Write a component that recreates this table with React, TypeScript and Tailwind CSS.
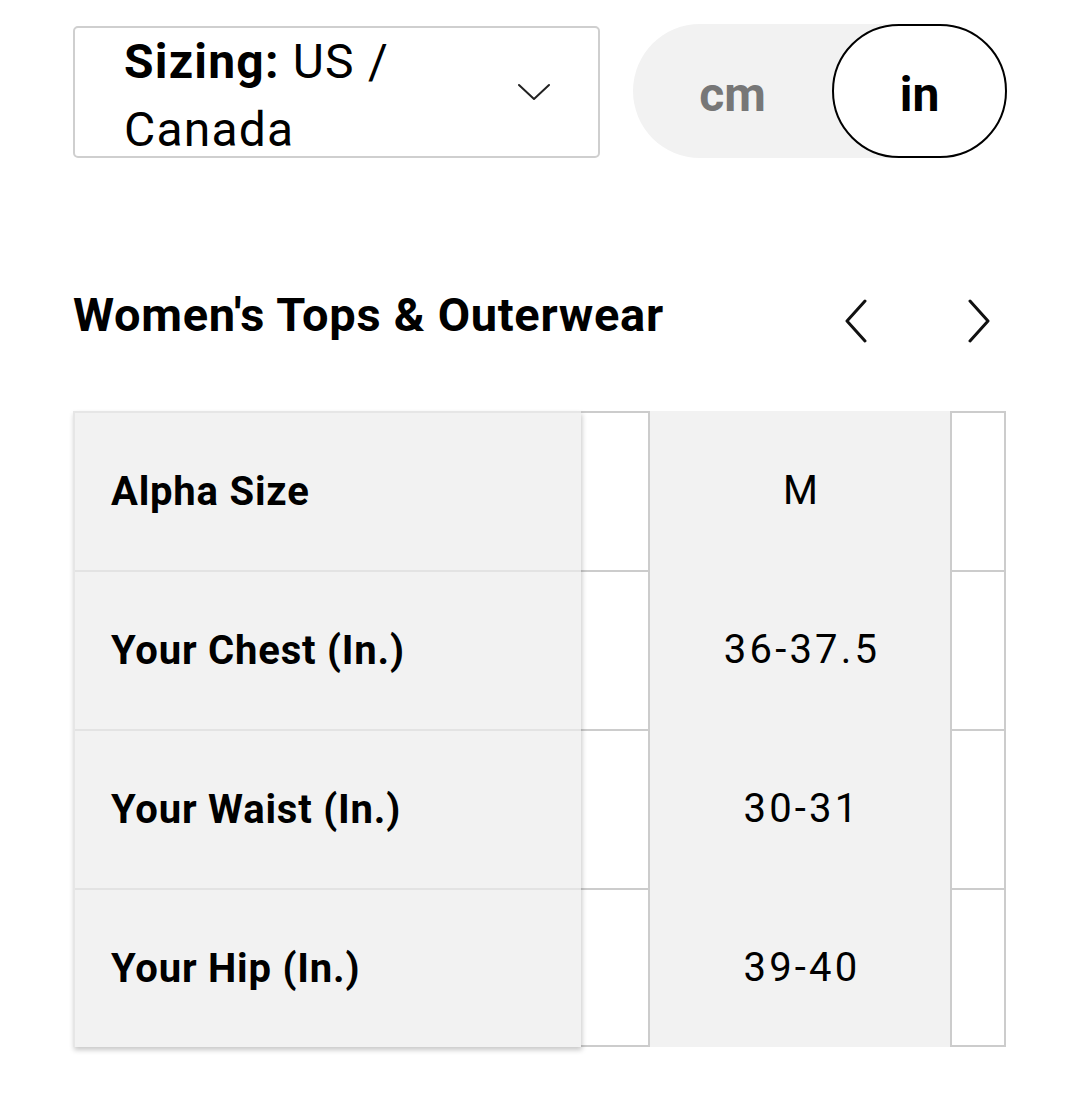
const ROWS = [
  { label: "Alpha Size", value: "M" },
  { label: "Your Chest (In.)", value: "36-37.5" },
  { label: "Your Waist (In.)", value: "30-31" },
  { label: "Your Hip (In.)", value: "39-40" },
];

const Arrow = ({ dir }: { dir: "left" | "right" }) => (
  <svg width="24" height="44" viewBox="0 0 24 44" fill="none" stroke="#111" strokeWidth="3" strokeLinecap="round" strokeLinejoin="round">
    {dir === "left" ? <polyline points="21,2 3,22 21,42" /> : <polyline points="3,2 21,22 3,42" />}
  </svg>
);

const App = () => {
  return (
    <div className="w-[1080px] h-[1111px] bg-white px-[73px] pt-[24px] font-['Roboto',sans-serif] text-black">
      {/* Top controls */}
      <div className="flex items-center justify-between">
        <div className="w-[527px] h-[132px] mt-[1px] border-2 border-[#cfcfcf] rounded-[5px] flex items-center pl-[49px] pr-[48px] overflow-hidden">
          <p className="flex-1 pr-[40px] text-[48px] leading-[68px] pt-[8px] tracking-[0.025em]">
            <span className="font-bold">Sizing:</span> US / Canada
          </p>
          <svg width="32" height="18" viewBox="0 0 32 18" fill="none" stroke="#222" strokeWidth="2" strokeLinecap="round" strokeLinejoin="round" className="shrink-0">
            <polyline points="1,2 16,16 31,2" />
          </svg>
        </div>

        <div className="w-[374px] h-[134px] rounded-full bg-[#f2f2f2] flex">
          <button className="flex-1 pt-[8px] text-[48px] font-bold text-[#777]">cm</button>
          <button className="w-[175px] h-full pt-[8px] rounded-full bg-white border-2 border-black text-[48px] font-bold">in</button>
        </div>
      </div>

      {/* Heading */}
      <div className="mt-[122px] h-[70px] flex items-center justify-between">
        <h2 className="text-[47px] font-bold tracking-[0.015em]">Women's Tops &amp; Outerwear</h2>
        <div className="flex items-center gap-[99px] mt-[12px] mr-[16px]">
          <Arrow dir="left" />
          <Arrow dir="right" />
        </div>
      </div>

      {/* Table */}
      <div className="mt-[61px] flex">
        <div className="w-[508px] relative z-10 bg-[#f2f2f2] border-t-2 border-l-2 border-[#e6e6e6] shadow-[1px_3px_5px_rgba(0,0,0,0.22)]">
          {ROWS.map((row, i) => (
            <div
              key={row.label}
              className={`flex items-center pl-[36px] text-[40px] font-bold tracking-[0.02em] ${i < ROWS.length - 1 ? "h-[159px] border-b-2 border-[#e3e3e3]" : "h-[157px]"}`}
            >
              {row.label}
            </div>
          ))}
        </div>

        <div className="w-[69px] border-r-2 border-t-2 border-[#cccccc] bg-white">
          {ROWS.map((row, i) => (
            <div key={row.label} className={`border-b-2 border-[#cccccc] ${i < ROWS.length - 1 ? "h-[159px]" : "h-[157px]"}`} />
          ))}
        </div>

        <div className="w-[302px] h-[636px] bg-[#f2f2f2] border-r-2 border-[#cccccc]">
          {ROWS.map((row) => (
            <div key={row.label} className="h-[159px] flex items-center justify-center pl-[4px] text-[40px] tracking-[0.08em]">
              {row.value}
            </div>
          ))}
        </div>

        <div className="w-[54px] border-r-2 border-t-2 border-[#cccccc] bg-white">
          {ROWS.map((row, i) => (
            <div key={row.label} className={`border-b-2 border-[#cccccc] ${i < ROWS.length - 1 ? "h-[159px]" : "h-[157px]"}`} />
          ))}
        </div>
      </div>
    </div>
  );
};

export default App;
